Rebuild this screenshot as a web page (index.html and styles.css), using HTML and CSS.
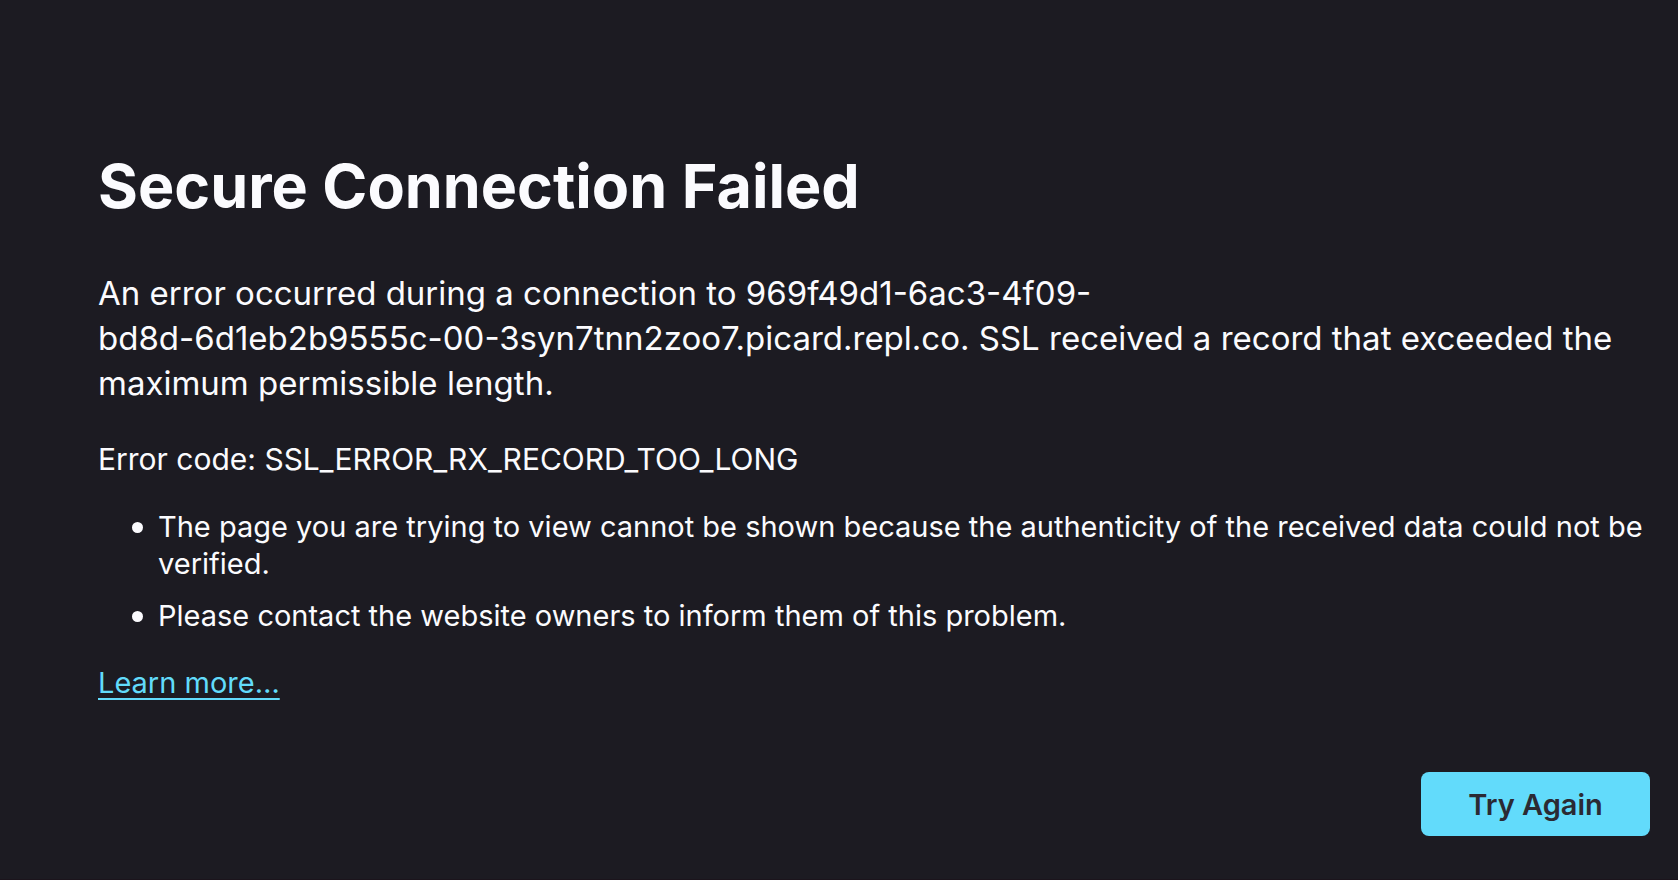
FILE: index.html
```html
<!DOCTYPE html>
<html lang="en">
<head>
<meta charset="utf-8">
<meta name="viewport" content="width=device-width, initial-scale=1">
<title>Secure Connection Failed</title>
<link rel="stylesheet" href="styles.css">
</head>
<body>
<main class="error-page">
  <h1 class="title">Secure Connection Failed</h1>
  <p class="summary">An error occurred during a connection to 969f49d1-6ac3-4f09-<br>bd8d-6d1eb2b9555c-00-3syn7tnn2zoo7.picard.repl.co. SSL received a record that exceeded the maximum permissible length.</p>
  <p class="code">Error code: SSL_ERROR_RX_RECORD_TOO_LONG</p>
  <ul class="details">
    <li>The page you are trying to view cannot be shown because the authenticity of the received data could not be verified.</li>
    <li>Please contact the website owners to inform them of this problem.</li>
  </ul>
  <p class="more"><a class="link" href="#">Learn more…</a></p>
  <div class="actions"><button class="retry" type="button">Try Again</button></div>
</main>
</body>
</html>
```

FILE: styles.css
```css
* {
  box-sizing: border-box;
}

body {
  margin: 0;
  min-height: 100vh;
  background: #1c1b22;
  color: #fbfbfe;
  font-family: Inter, "Liberation Sans", sans-serif;
  font-size: 29px;
  line-height: 37px;
  border-bottom: 1px solid #1b141c;
}

.error-page {
  padding: 148px 28px 40px 98px;
}

.title {
  margin: 0;
  font-size: 61px;
  line-height: 76px;
  font-weight: 700;
}

.summary {
  margin: 47px 0 0;
  font-size: 33px;
  line-height: 45px;
}

.code {
  margin: 35px 0 0;
  font-size: 30px;
}

.details {
  margin: 30px 0 0;
  padding-left: 34px;
  list-style: none;
}

.details li {
  display: grid;
  grid-template-columns: 11px 1fr;
  column-gap: 15px;
}

.details li::before {
  content: "";
  height: 11px;
  margin-top: 14px;
  border-radius: 50%;
  background: currentColor;
}

.details li + li {
  margin-top: 15px;
}

.more {
  margin: 30px 0 0;
}

.link {
  color: #62dbfb;
  text-decoration-thickness: 2px;
  text-underline-offset: 5px;
}

.actions {
  display: flex;
  justify-content: flex-end;
  margin-top: 71px;
}

.retry {
  min-width: 229px;
  min-height: 64px;
  padding: 0 46px;
  border: 0;
  border-radius: 8px;
  background: #62dbfb;
  color: #2b2a33;
  font: inherit;
  font-weight: 600;
}
```
